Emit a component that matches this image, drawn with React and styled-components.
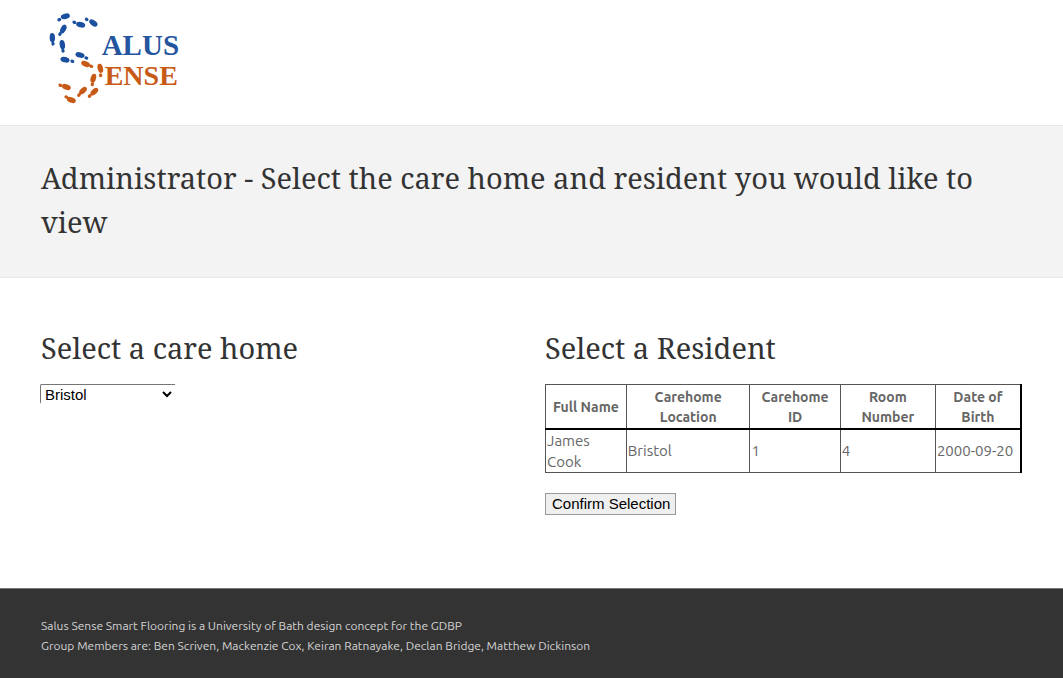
import React from "react";
import styled, { createGlobalStyle } from "styled-components";

const GlobalStyle = createGlobalStyle`
  *, *::before, *::after { box-sizing: border-box; }
  body {
    margin: 0;
    background: #fff;
    color: #666;
    font: 15px/20px Ubuntu, "Noto Sans", sans-serif;
  }
`;

const Header = styled.header`
  height: 125px;
  padding: 5px 40px;
`;

const HomeLink = styled.a`
  display: inline-block;
`;

const Banner = styled.section`
  padding: 30px 41px 33px;
  background: #f3f3f3;
  border-top: 1px solid #e8e8e8;
  border-bottom: 1px solid #e8e8e8;
`;

const headingFont = `
  margin: 0;
  color: #333;
  font-family: "Droid Serif", "Noto Serif", "DejaVu Serif Condensed", "DejaVu Serif", serif;
  font-size: 29px;
  font-weight: 400;
  line-height: 44px;
`;

const PageTitle = styled.h1`
  ${headingFont}
`;

const SectionTitle = styled.h2`
  ${headingFont}
  margin-bottom: 14px;
`;

const Columns = styled.main`
  display: grid;
  grid-template-columns: 1fr 1fr;
  gap: 27px;
  padding: 48px 41px 73px;
`;

const Select = styled.select`
  display: block;
  width: 136px;
  height: 20px;
  margin-left: -1px;
  padding: 0;
  border: 1px solid;
  border-color: #767676 #fff #fff #767676;
  border-radius: 2px;
  background: #fff;
  color: #000;
  font: 15px "Liberation Sans", Arial, sans-serif;
`;

const Table = styled.table`
  width: 100%;
  margin-bottom: 20px;
  border-collapse: collapse;
  table-layout: fixed;
  border: 1px solid #555;
`;

const Column = styled.col`
  width: ${(p) => p.$share}%;
`;

const HeadCell = styled.th`
  height: 44px;
  padding: 2px 4px 0;
  border: 1px solid #555;
  border-bottom: 2px solid #000;
  font-weight: 700;
  font-size: 14px;
  line-height: 20px;

  &:last-child { border-right: 2px solid #000; }
`;

const Cell = styled.td`
  height: 43px;
  padding: 0 1px;
  border: 1px solid #555;
  font-size: 15px;
  line-height: 21px;

  &:last-child { border-right: 2px solid #000; }
`;

const Button = styled.button`
  display: block;
  height: 22px;
  padding: 0 5px 1px 6px;
  border: 1px solid #999;
  border-radius: 0;
  background: #efefef;
  color: #000;
  font: 15px "Liberation Sans", Arial, sans-serif;
`;

const Footer = styled.footer`
  padding: 27px 41px 22px;
  border-top: 1px solid #777;
  background: #333;
  color: #d4d4d4;
  font-size: 12px;
  line-height: 20px;

  p { margin: 0; }
`;

const blue = "#1b4f9f";
const orange = "#c85a17";

// Each step: sole centre, sole angle, heel centre, colour.
const steps = [
  [76, 34, -15, 58, 44, blue],
  [122, 59, 16, 103, 52, blue],
  [160, 54, 36, 140, 43, blue],
  [70, 72, -62, 60, 87, blue],
  [37, 98, 88, 39, 116, blue],
  [67, 119, 80, 69, 137, blue],
  [120, 150, 16, 139, 159, blue],
  [75, 164, 16, 97, 169, blue],
  [137, 177, 22, 154, 184, orange],
  [181, 190, 76, 182, 211, orange],
  [160, 220, -74, 157, 238, orange],
  [79, 246, 20, 61, 241, orange],
  [129, 257, -44, 117, 270, orange],
  [163, 260, -44, 149, 273, orange],
  [94, 285, 20, 79, 276, orange],
];

function Logo() {
  return (
    <svg width="150" height="105" viewBox="0 0 450 315" role="img" aria-label="Salus Sense">
      {steps.map(([x, y, angle, hx, hy, fill]) => (
        <g key={`${x}-${y}`} fill={fill}>
          <ellipse cx={x} cy={y} rx="14" ry="8" transform={`rotate(${angle} ${x} ${y})`} />
          <ellipse cx={hx} cy={hy} rx="6" ry="5" transform={`rotate(${angle} ${hx} ${hy})`} />
        </g>
      ))}
      <g fontFamily="'Liberation Serif', serif" fontWeight="700">
        <text x="185" y="149" fontSize="87" fill="#25559f">ALUS</text>
        <text x="194" y="239" fontSize="84" fill="#c85a17">ENSE</text>
      </g>
    </svg>
  );
}

const columns = [
  ["Full Name", 17],
  ["Carehome Location", 26],
  ["Carehome ID", 19],
  ["Room Number", 20],
  ["Date of Birth", 18],
];

const resident = ["James Cook", "Bristol", "1", "4", "2000-09-20"];

export default function App() {
  return (
    <>
      <GlobalStyle />
      <Header>
        <HomeLink href="#"><Logo /></HomeLink>
      </Header>
      <Banner>
        <PageTitle>Administrator - Select the care home and resident you would like to view</PageTitle>
      </Banner>
      <Columns>
        <section>
          <SectionTitle id="care-home">Select a care home</SectionTitle>
          <Select aria-labelledby="care-home" defaultValue="Bristol">
            <option>Bristol</option>
          </Select>
        </section>
        <section>
          <SectionTitle id="resident">Select a Resident</SectionTitle>
          <Table aria-labelledby="resident">
            <colgroup>
              {columns.map(([name, share]) => <Column key={name} $share={share} />)}
            </colgroup>
            <thead>
              <tr>{columns.map(([name]) => <HeadCell key={name} scope="col">{name}</HeadCell>)}</tr>
            </thead>
            <tbody>
              <tr>{resident.map((value) => <Cell key={value}>{value}</Cell>)}</tr>
            </tbody>
          </Table>
          <Button type="button">Confirm Selection</Button>
        </section>
      </Columns>
      <Footer>
        <p>Salus Sense Smart Flooring is a University of Bath design concept for the GDBP</p>
        <p>Group Members are: Ben Scriven, Mackenzie Cox, Keiran Ratnayake, Declan Bridge, Matthew Dickinson</p>
      </Footer>
    </>
  );
}
